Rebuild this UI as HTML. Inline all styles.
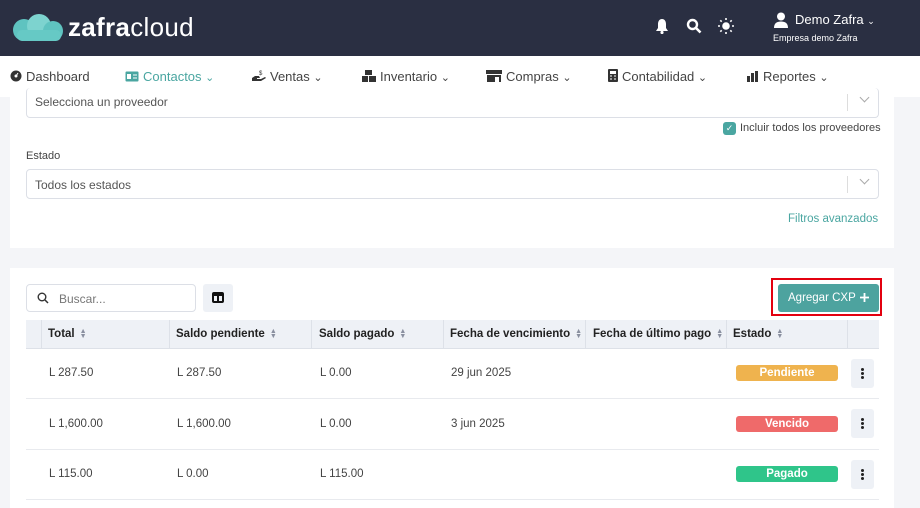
<!DOCTYPE html>
<html><head><meta charset="utf-8"><style>
*{box-sizing:border-box;margin:0;padding:0}
body{width:920px;height:508px;overflow:hidden;background:#f4f5f8;font-family:"Liberation Sans",sans-serif;color:#333;position:relative}
.hdr{position:absolute;left:0;top:0;width:920px;height:56px;background:#2a2f42}
.nav{position:absolute;left:0;top:56px;width:920px;height:41px;background:#fff;font-size:13px;color:#444}
.nav span{position:absolute;top:13px}
.nav svg{vertical-align:-1px;margin-right:4px}
.card{position:absolute;background:#fff;left:10px;width:884px}
.sel{position:absolute;left:26px;width:853px;height:30px;border:1px solid #dcdfe6;border-radius:4px;font-size:12px;color:#555;padding:8px 8px}
.sel:after{content:"";position:absolute;right:30px;top:6px;height:17px;border-left:1px solid #ddd}
.sel i{position:absolute;right:10px;top:6px;width:7px;height:7px;border-right:1px solid #aaa;border-bottom:1px solid #aaa;transform:rotate(45deg)}
.th{position:absolute;top:320px;height:29px;background:#eef1f6;border-bottom:1px solid #dde1e8;font-size:11.5px;font-weight:bold;color:#222;padding-top:8px}
.th b{display:inline-block;margin-left:5px;color:#8a90a0;font-size:7px;line-height:5px;vertical-align:middle;text-align:center}
.cell{position:absolute;font-size:11.5px;color:#444}
.badge{position:absolute;left:736px;width:102px;height:16px;border-radius:3px;color:#fff;font-size:11.5px;font-weight:bold;text-align:center;line-height:16px}
.dots{position:absolute;left:851px;width:23px;height:29px;background:#eef1f6;border-radius:3px}
.dots:before{content:"";position:absolute;left:10px;top:9px;width:3px;height:3px;border-radius:50%;background:#222;box-shadow:0 4px 0 #222,0 8px 0 #222}
.line{position:absolute;left:26px;width:853px;border-top:1px solid #e8eaee}
</style></head><body>
<div class="hdr">
 <svg style="position:absolute;left:11px;top:14px" width="56" height="28"><circle cx="13" cy="16" r="11" fill="#5fc3c0"/><circle cx="28" cy="12" r="12" fill="#7dd3cf"/><circle cx="42" cy="17" r="10" fill="#5fc3c0"/><rect x="6" y="16" width="44" height="11" rx="5" fill="#66c9c5"/></svg>
 <div style="position:absolute;left:68px;top:12px;font-size:26px;color:#fff;letter-spacing:0.3px"><b>zafra</b>cloud</div>
 <svg style="position:absolute;left:655px;top:18px" width="14" height="16"><path d="M7 1C4 1 3 4 3 6v4L1 13h12l-2-3V6C11 4 10 1 7 1z" fill="#fff"/><circle cx="7" cy="14.5" r="1.6" fill="#fff"/></svg>
 <svg style="position:absolute;left:686px;top:18px" width="16" height="16"><circle cx="6.5" cy="6.5" r="4.5" stroke="#fff" stroke-width="2.4" fill="none"/><path d="M10 10l4.5 4.5" stroke="#fff" stroke-width="2.6"/></svg>
 <svg style="position:absolute;left:718px;top:18px" width="16" height="16"><circle cx="8" cy="8" r="3.8" fill="#fff"/><g stroke="#fff" stroke-width="1.6"><path d="M8 0v2M8 14v2M0 8h2M14 8h2M2.3 2.3l1.4 1.4M12.3 12.3l1.4 1.4M2.3 13.7l1.4-1.4M12.3 3.7l1.4-1.4"/></g></svg>
 <svg style="position:absolute;left:773px;top:12px" width="16" height="16"><circle cx="8" cy="4.5" r="4" fill="#fff"/><path d="M1 16c0-5 3-6.5 7-6.5s7 1.5 7 6.5z" fill="#fff"/></svg>
 <div style="position:absolute;left:795px;top:12px;color:#fff;font-size:13px">Demo Zafra <span style="font-size:9px">⌄</span></div>
 <div style="position:absolute;left:773px;top:33px;color:#fff;font-size:9px">Empresa demo Zafra</div>
</div>
<div class="nav">
 <span style="left:10px"><svg width="12" height="12"><circle cx="6" cy="6" r="5.5" fill="#333"/><circle cx="6" cy="6" r="1.5" fill="#fff"/><path d="M6 6l2-3" stroke="#fff"/></svg>Dashboard</span>
 <span style="left:125px;color:#4aa6a1"><svg width="14" height="11"><rect x="0.5" y="0.5" width="13" height="10" rx="1" fill="#4aa6a1"/><rect x="2" y="3" width="4" height="5" fill="#fff"/><path d="M8 4h4M8 7h4" stroke="#fff"/></svg>Contactos <small>⌄</small></span>
 <span style="left:252px"><svg width="14" height="12"><path d="M0 11h9l5-3-1-1-4 2H5v-1h3l-1-2H3L0 8z" fill="#333"/><text x="7" y="5" font-size="6" fill="#333">$</text></svg>Ventas <small>⌄</small></span>
 <span style="left:362px"><svg width="14" height="12"><rect x="0" y="6" width="6" height="6" fill="#333"/><rect x="7" y="6" width="7" height="6" fill="#333"/><rect x="3" y="0" width="7" height="5" fill="#333"/></svg>Inventario <small>⌄</small></span>
 <span style="left:486px"><svg width="16" height="12"><rect x="0" y="0" width="16" height="4" fill="#333"/><rect x="1" y="5" width="14" height="7" fill="#333"/><rect x="9" y="7" width="4" height="5" fill="#fff"/></svg>Compras <small>⌄</small></span>
 <span style="left:608px"><svg width="10" height="13"><rect x="0" y="0" width="10" height="13" rx="1" fill="#333"/><rect x="2" y="2" width="6" height="3" fill="#fff"/><path d="M2 7h2M6 7h2M2 10h2M6 10h2" stroke="#fff"/></svg>Contabilidad <small>⌄</small></span>
 <span style="left:747px"><svg width="12" height="11"><rect x="0" y="5" width="3" height="6" fill="#333"/><rect x="4" y="2" width="3" height="9" fill="#333"/><rect x="8" y="0" width="3" height="11" fill="#333"/></svg>Reportes <small>⌄</small></span>
</div>
<div class="card" style="top:97px;height:151px"></div>
<div class="sel" style="top:88px;border-top:none;padding-top:7px">Selecciona un proveedor<i></i></div>
<div style="position:absolute;left:723px;top:122px;width:13px;height:13px;background:#4aa6a1;border-radius:3px;color:#fff;font-size:9px;text-align:center;line-height:13px">✓</div>
<div style="position:absolute;left:740px;top:122px;font-size:11px;color:#444">Incluir todos los proveedores</div>
<div style="position:absolute;left:26px;top:150px;font-size:11px;color:#444">Estado</div>
<div class="sel" style="top:169px">Todos los estados<i></i></div>
<div style="position:absolute;left:788px;top:213px;font-size:11.5px;color:#4aa6a1">Filtros avanzados</div>
<div class="card" style="top:268px;height:240px"></div>
<div style="position:absolute;left:26px;top:284px;width:170px;height:28px;border:1px solid #dcdfe6;border-radius:4px;font-size:12px;color:#777;padding:7px 0 0 32px">Buscar...</div>
<svg style="position:absolute;left:37px;top:292px" width="12" height="12"><circle cx="5" cy="5" r="3.8" stroke="#333" stroke-width="1.4" fill="none"/><path d="M8 8l3 3" stroke="#333" stroke-width="1.5"/></svg>
<div style="position:absolute;left:203px;top:284px;width:30px;height:28px;background:#eef1f6;border-radius:3px"></div>
<svg style="position:absolute;left:212px;top:292px" width="12" height="11"><rect x="1" y="1" width="10" height="9" rx="1" fill="none" stroke="#111" stroke-width="2"/><path d="M6 1v9M1 3h10" stroke="#111" stroke-width="2"/></svg>
<div style="position:absolute;left:771px;top:278px;width:111px;height:38px;border:2px solid #e3000f"></div>
<div style="position:absolute;left:778px;top:284px;width:101px;height:28px;background:#4da39f;border-radius:3px;color:#fff;font-size:11.5px;line-height:28px;padding-left:10px">Agregar CXP</div>
<svg style="position:absolute;left:860px;top:293px" width="9" height="9"><path d="M4.5 0v9M0 4.5h9" stroke="#fff" stroke-width="1.8"/></svg>
<div class="th" style="left:26px;width:16px;border-right:1px solid #dde1e8"></div>
<div class="th" style="left:42px;width:128px;padding-left:6px;border-right:1px solid #dde1e8">Total<b>▲<br>▼</b></div>
<div class="th" style="left:170px;width:142px;padding-left:6px;border-right:1px solid #dde1e8">Saldo pendiente<b>▲<br>▼</b></div>
<div class="th" style="left:312px;width:132px;padding-left:7px;border-right:1px solid #dde1e8">Saldo pagado<b>▲<br>▼</b></div>
<div class="th" style="left:444px;width:142px;padding-left:6px;border-right:1px solid #dde1e8;white-space:nowrap;overflow:hidden">Fecha de vencimiento<b>▲<br>▼</b></div>
<div class="th" style="left:586px;width:141px;padding-left:7px;border-right:1px solid #dde1e8;white-space:nowrap;overflow:hidden">Fecha de último pago<b>▲<br>▼</b></div>
<div class="th" style="left:727px;width:121px;padding-left:6px;border-right:1px solid #dde1e8">Estado<b>▲<br>▼</b></div>
<div class="th" style="left:848px;width:31px"></div>
<div class="cell" style="left:49px;top:367px">L 287.50</div><div class="cell" style="left:177px;top:367px">L 287.50</div><div class="cell" style="left:320px;top:367px">L 0.00</div><div class="cell" style="left:451px;top:367px">29 jun 2025</div>
<div class="badge" style="top:365px;background:#efb34e">Pendiente</div><div class="dots" style="top:359px"></div>
<div class="line" style="top:398px"></div>
<div class="cell" style="left:49px;top:418px">L 1,600.00</div><div class="cell" style="left:177px;top:418px">L 1,600.00</div><div class="cell" style="left:320px;top:418px">L 0.00</div><div class="cell" style="left:451px;top:418px">3 jun 2025</div>
<div class="badge" style="top:416px;background:#ef6a6a">Vencido</div><div class="dots" style="top:409px"></div>
<div class="line" style="top:449px"></div>
<div class="cell" style="left:49px;top:468px">L 115.00</div><div class="cell" style="left:177px;top:468px">L 0.00</div><div class="cell" style="left:320px;top:468px">L 115.00</div>
<div class="badge" style="top:466px;background:#2fc58a">Pagado</div><div class="dots" style="top:460px"></div>
<div class="line" style="top:499px"></div>
</body></html>
